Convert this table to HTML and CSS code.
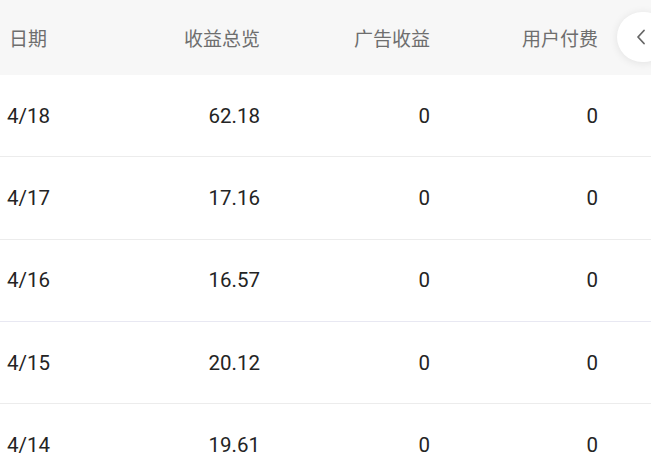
FILE: index.html
```html
<!DOCTYPE html>
<html lang="zh">
<head>
<meta charset="utf-8">
<link rel="stylesheet" href="styles.css">
</head>
<body>
<div class="table">
  <div class="row head">
    <div class="cell left">日期</div>
    <div class="cell">收益总览</div>
    <div class="cell">广告收益</div>
    <div class="cell">用户付费</div>
  </div>
  <div class="row">
    <div class="cell left">4/18</div>
    <div class="cell">62.18</div>
    <div class="cell">0</div>
    <div class="cell">0</div>
  </div>
  <div class="row">
    <div class="cell left">4/17</div>
    <div class="cell">17.16</div>
    <div class="cell">0</div>
    <div class="cell">0</div>
  </div>
  <div class="row">
    <div class="cell left">4/16</div>
    <div class="cell">16.57</div>
    <div class="cell">0</div>
    <div class="cell">0</div>
  </div>
  <div class="row">
    <div class="cell left">4/15</div>
    <div class="cell">20.12</div>
    <div class="cell">0</div>
    <div class="cell">0</div>
  </div>
  <div class="row">
    <div class="cell left">4/14</div>
    <div class="cell">19.61</div>
    <div class="cell">0</div>
    <div class="cell">0</div>
  </div>
  <div class="toggle">
    <svg width="10" height="16" viewBox="0 0 10 16"><path d="M8 1.5 L2 8 L8 14.5" fill="none" stroke="#666" stroke-width="1.8" stroke-linecap="round" stroke-linejoin="round"/></svg>
  </div>
</div>
</body>
</html>
```
FILE: styles.css
```css
html, body {
  margin: 0;
  padding: 0;
  background: #fff;
}
body {
  font-family: Roboto, "Noto Sans CJK SC", sans-serif;
  color: #242424;
  overflow: hidden;
}
.table {
  position: relative;
  width: 651px;
}
.row {
  display: grid;
  grid-template-columns: 100px 153px 170px 168px;
  padding-left: 7px;
  box-sizing: border-box;
  height: 82.3px;
  align-items: center;
  border-bottom: 1px solid #ececec;
  font-size: 20.5px;
}
.row:nth-child(4) {
  border-bottom-color: #e8e8f2;
}
.row.head {
  height: 75px;
  background: #f7f7f7;
  border-bottom: none;
  color: #6e6e6e;
  font-size: 19px;
  font-family: "Noto Sans CJK SC", sans-serif;
}
.cell {
  text-align: right;
}
.cell.left {
  text-align: left;
}
.row.head .cell.left {
  padding-left: 2px;
}
.toggle {
  position: absolute;
  left: 617px;
  top: 12px;
  width: 52px;
  height: 50px;
  border-radius: 25px;
  background: #fff;
  box-shadow: 0 1px 8px rgba(0, 0, 0, 0.09);
  display: flex;
  align-items: center;
  padding-left: 19px;
  box-sizing: border-box;
}
```
